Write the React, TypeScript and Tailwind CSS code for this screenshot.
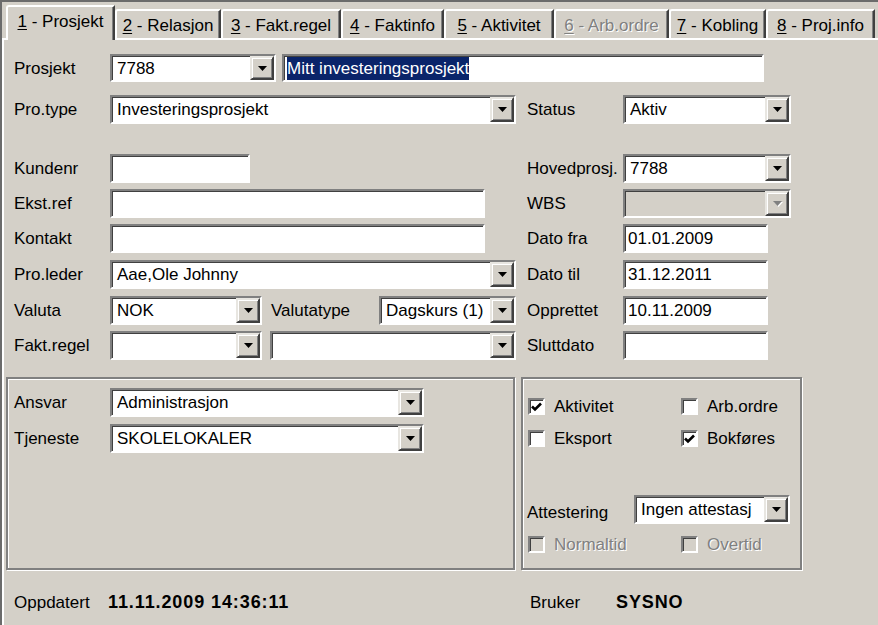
import React from "react";

const sunken =
  "border-2 border-t-[#808080] border-l-[#808080] border-b-white border-r-white shadow-[inset_1px_1px_0_#404040]";

const Arrow = ({ disabled }: { disabled?: boolean }) => (
  <svg width="11" height="7" viewBox="0 0 11 7">
    {disabled && <path d="M2 2h9L6.5 7z" fill="#fff" />}
    <path d="M1 1h9L5.5 6z" fill={disabled ? "#808080" : "#000"} />
  </svg>
);

const DropButton = ({ disabled }: { disabled?: boolean }) => (
  <div className="w-[24px] h-full shrink-0 flex items-center justify-center bg-[#d4d0c8] border-2 border-t-[#e8e6e1] border-l-[#e8e6e1] border-r-[#404040] border-b-[#404040] shadow-[inset_1px_1px_0_#fff,inset_-1px_-1px_0_#808080]">
    <Arrow disabled={disabled} />
  </div>
);

const Combo = ({ w, value, disabled, h = "h-[29px]" }: { w: string; value?: string; disabled?: boolean; h?: string }) => (
  <div className={`${w} ${h} ${sunken} flex shrink-0 ${disabled ? "bg-[#d4d0c8]" : "bg-white"}`}>
    <div className="flex-1 flex items-center px-[5px] whitespace-nowrap overflow-hidden">{value}</div>
    <DropButton disabled={disabled} />
  </div>
);

const Field = ({ w, value, h = "h-[29px]" }: { w: string; value?: string; h?: string }) => (
  <div className={`${w} ${h} ${sunken} bg-white flex items-center px-[3px] shrink-0 whitespace-nowrap`}>{value}</div>
);

const Label = ({ children, w = "w-[96px]" }: { children: React.ReactNode; w?: string }) => (
  <div className={`${w} shrink-0 whitespace-nowrap`}>{children}</div>
);

const Check = ({ checked, disabled, label }: { checked?: boolean; disabled?: boolean; label: string }) => (
  <div className="w-[153px] flex items-center shrink-0">
    <div className={`w-[17px] h-[17px] ${sunken} ${disabled ? "bg-[#d4d0c8]" : "bg-white"} flex items-center justify-center`}>
      {checked && (
        <svg width="11" height="10" viewBox="0 0 11 10">
          <path d="M1 4.5l3 3L10 1.5" stroke="#000" strokeWidth="2.6" fill="none" />
        </svg>
      )}
    </div>
    <span className={`ml-[9px] ${disabled ? "text-[#808080] [text-shadow:1px_1px_0_#fff]" : ""}`}>{label}</span>
  </div>
);

const tabs = [
  { n: "1", t: " - Prosjekt", w: "w-[109px]" },
  { n: "2", t: " - Relasjon", w: "w-[106px]" },
  { n: "3", t: " - Fakt.regel", w: "w-[120px]" },
  { n: "4", t: " - Faktinfo", w: "w-[103px]" },
  { n: "5", t: " - Aktivitet", w: "w-[110px]" },
  { n: "6", t: " - Arb.ordre", w: "w-[115px]", disabled: true },
  { n: "7", t: " - Kobling", w: "w-[97px]" },
  { n: "8", t: " - Proj.info", w: "w-[109px]" },
];

export default function App() {
  return (
    <div className="w-[878px] h-[625px] bg-[#d4d0c8] border-t-2 border-l-2 border-[#6b6b6b] overflow-hidden flex flex-col font-['Liberation_Sans',Arial,sans-serif] text-[17px] text-black leading-none">
      {/* tab strip */}
      <div className="h-[36px] flex items-end pl-[4px] shrink-0">
        {tabs.map((tab, i) => {
          const active = i === 0;
          return (
            <div
              key={tab.n}
              className={`${tab.w} shrink-0 flex items-center justify-center whitespace-nowrap rounded-tl-[3px] border-t-2 border-l-2 border-r-2 border-t-white border-l-white border-r-[#404040] shadow-[inset_-1px_0_0_#808080] ${
                active ? "h-[35px] -mb-[2px] relative z-10 bg-[#d4d0c8] pb-[4px]" : "h-[29px] pt-[1px]"
              } ${tab.disabled ? "text-[#808080] [text-shadow:1px_1px_0_#fff]" : ""}`}
            >
              <span className="underline underline-offset-2">{tab.n}</span>
              <span className="whitespace-pre">{tab.t}</span>
            </div>
          );
        })}
      </div>

      {/* panel */}
      <div className="flex-1 border-t-2 border-l-2 border-white flex flex-col pt-[14px]">
        <div className="flex items-center pl-[10px] h-[28px]">
          <Label>Prosjekt</Label>
          <Combo w="w-[166px]" h="h-[28px]" value="7788" />
          <div className={`ml-[6px] w-[482px] h-[28px] ${sunken} bg-white flex items-center pl-[3px]`}>
            <span className="bg-[#0a246a] text-white py-[3px]">Mitt investeringsprosjekt</span>
          </div>
        </div>

        <div className="flex items-center pl-[10px] mt-[13px]">
          <div className="w-[513px] flex items-center shrink-0">
            <Label>Pro.type</Label>
            <Combo w="w-[406px]" value="Investeringsprosjekt" />
          </div>
          <Label>Status</Label>
          <Combo w="w-[168px]" value="Aktiv" />
        </div>

        <div className="flex items-center pl-[10px] mt-[30px]">
          <div className="w-[513px] flex items-center shrink-0">
            <Label>Kundenr</Label>
            <Field w="w-[140px]" />
          </div>
          <Label>Hovedprosj.</Label>
          <Combo w="w-[168px]" value="7788" />
        </div>

        <div className="flex items-center pl-[10px] mt-[6px]">
          <div className="w-[513px] flex items-center shrink-0">
            <Label>Ekst.ref</Label>
            <Field w="w-[375px]" />
          </div>
          <Label>WBS</Label>
          <Combo w="w-[168px]" disabled />
        </div>

        <div className="flex items-center pl-[10px] mt-[6px]">
          <div className="w-[513px] flex items-center shrink-0">
            <Label>Kontakt</Label>
            <Field w="w-[375px]" />
          </div>
          <Label>Dato fra</Label>
          <Field w="w-[145px]" value="01.01.2009" />
        </div>

        <div className="flex items-center pl-[10px] mt-[7px]">
          <div className="w-[513px] flex items-center shrink-0">
            <Label>Pro.leder</Label>
            <Combo w="w-[406px]" value="Aae,Ole Johnny" />
          </div>
          <Label>Dato til</Label>
          <Field w="w-[145px]" value="31.12.2011" />
        </div>

        <div className="flex items-center pl-[10px] mt-[7px]">
          <div className="w-[513px] flex items-center shrink-0">
            <Label>Valuta</Label>
            <Combo w="w-[152px]" value="NOK" />
            <Label w="w-[117px] pl-[9px]">Valutatype</Label>
            <Combo w="w-[137px]" value="Dagskurs (1)" />
          </div>
          <Label>Opprettet</Label>
          <Field w="w-[145px]" value="10.11.2009" />
        </div>

        <div className="flex items-center pl-[10px] mt-[6px]">
          <div className="w-[513px] flex items-center shrink-0">
            <Label>Fakt.regel</Label>
            <Combo w="w-[152px]" />
            <Combo w="w-[246px] ml-[8px]" />
          </div>
          <Label>Sluttdato</Label>
          <Field w="w-[145px]" />
        </div>

        {/* group boxes */}
        <div className="flex pl-[2px] mt-[17px] gap-[6px]">
          <div className="w-[509px] h-[193px] border-2 border-[#808080] shadow-[inset_1px_1px_0_#fff,1px_1px_0_#fff] pl-[6px] pt-[9px] flex flex-col">
            <div className="flex items-center">
              <Label>Ansvar</Label>
              <Combo w="w-[314px]" value="Administrasjon" />
            </div>
            <div className="flex items-center mt-[7px]">
              <Label>Tjeneste</Label>
              <Combo w="w-[314px]" value="SKOLELOKALER" />
            </div>
          </div>

          <div className="w-[281px] h-[193px] border-2 border-[#808080] shadow-[inset_1px_1px_0_#fff,1px_1px_0_#fff] pl-[5px] pt-[19px] flex flex-col">
            <div className="flex items-center">
              <Check checked label="Aktivitet" />
              <Check label="Arb.ordre" />
            </div>
            <div className="flex items-center mt-[15px]">
              <Check label="Eksport" />
              <Check checked label="Bokføres" />
            </div>
            <div className="flex items-center mt-[48px] -ml-[1px]">
              <div className="w-[107px] shrink-0 translate-y-[3px]">Attestering</div>
              <Combo w="w-[156px]" value="Ingen attestasj" />
            </div>
            <div className="flex items-center mt-[12px]">
              <Check disabled label="Normaltid" />
              <Check disabled label="Overtid" />
            </div>
          </div>
        </div>

        {/* status line */}
        <div className="flex items-center pl-[10px] mt-[20px] h-[24px] whitespace-nowrap">
          <div className="w-[94px] shrink-0">Oppdatert</div>
          <div className="w-[422px] shrink-0 font-bold text-[18px] tracking-[0.9px]">11.11.2009 14:36:11</div>
          <div className="w-[86px] shrink-0">Bruker</div>
          <div className="font-bold text-[18px] tracking-[0.9px]">SYSNO</div>
        </div>
      </div>
    </div>
  );
}
